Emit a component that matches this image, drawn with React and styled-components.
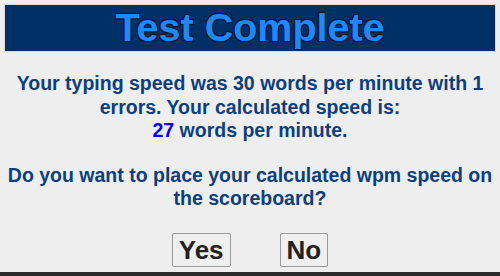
import React from "react";
import styled, { createGlobalStyle } from "styled-components";

const GlobalStyle = createGlobalStyle`
  html, body {
    margin: 0;
    padding: 0;
    background: #2b2b2b;
  }
`;

const Dialog = styled.div`
  width: 500px;
  height: 272px;
  box-sizing: border-box;
  background: #eeeeee;
  padding: 4px 4px 0;
  font-family: "Liberation Sans", Arial, sans-serif;
  display: flex;
  flex-direction: column;
  align-items: stretch;
`;

const Header = styled.div`
  height: 46px;
  background: #002f66;
  border: 1px solid #d8d8d8;
  display: flex;
  align-items: center;
  justify-content: center;
`;

const Title = styled.h1`
  margin: 0;
  font-family: "Liberation Sans", Arial, sans-serif;
  font-size: 39.5px;
  font-weight: 700;
  color: #1e88ff;
  line-height: 1;
  text-shadow: 1px 0 0 #08182c, -1px 0 0 #08182c, 0 1px 0 #08182c,
    0 -1px 0 #08182c, 1px 1px 0 #08182c, -1px -1px 0 #08182c,
    1px -1px 0 #08182c, -1px 1px 0 #08182c;
`;

const Message = styled.p`
  margin: ${(p) => p.$top} 0 0;
  text-align: center;
  font-size: 19.5px;
  font-weight: bold;
  line-height: 23.5px;
  color: #0b3f80;
`;

const Speed = styled.span`
  color: #0000ff;
`;

const Buttons = styled.div`
  margin-top: 22px;
  display: flex;
  justify-content: center;
  gap: 49px;
`;

const Button = styled.button`
  font-family: "Liberation Sans", Arial, sans-serif;
  font-size: 26px;
  font-weight: bold;
  color: #222;
  background: #efefef;
  border: 1px solid #9a9a9a;
  border-radius: 2px;
  padding: 1px 6px;
  height: 34px;
`;

export default function App() {
  return (
    <>
      <GlobalStyle />
      <Dialog>
        <Header>
          <Title>Test Complete</Title>
        </Header>
        <Message $top="20px">
          Your typing speed was 30 words per minute with 1 errors. Your
          calculated speed is:
          <br />
          <Speed>27</Speed> words per minute.
        </Message>
        <Message $top="21px">
          Do you want to place your calculated wpm speed on the scoreboard?
        </Message>
        <Buttons>
          <Button>Yes</Button>
          <Button>No</Button>
        </Buttons>
      </Dialog>
    </>
  );
}
